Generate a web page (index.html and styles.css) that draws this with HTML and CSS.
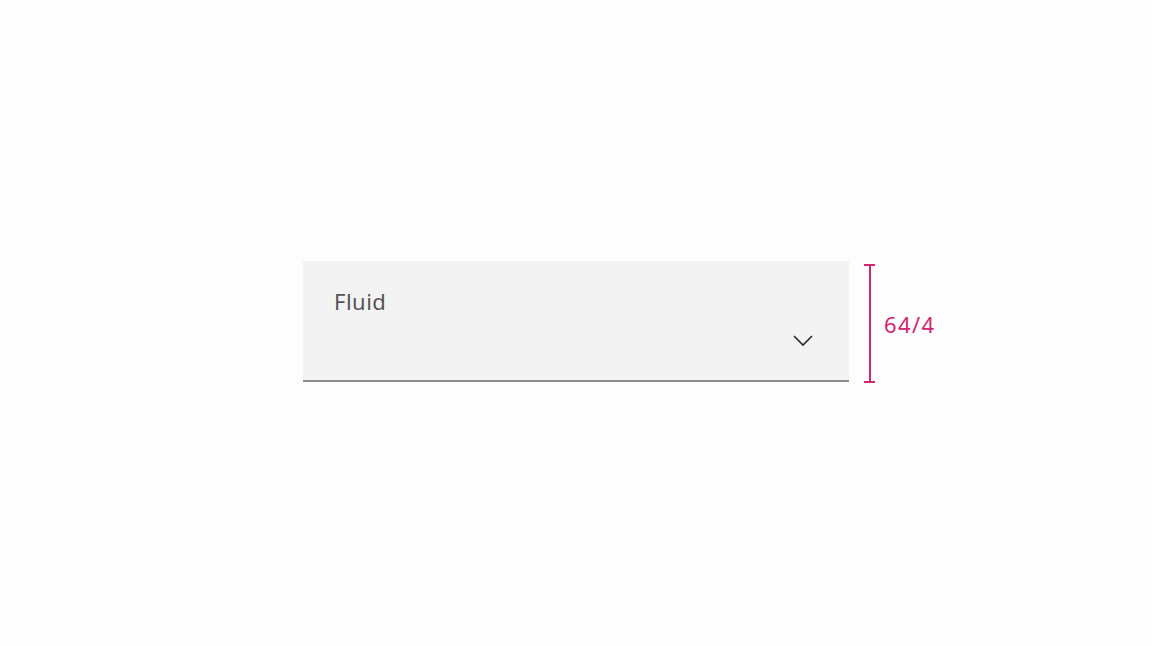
FILE: index.html
```html
<!DOCTYPE html>
<html>
<head>
<meta charset="utf-8">
<link rel="stylesheet" href="styles.css">
</head>
<body>
<div class="stage">
  <div class="field">
    <div class="label">Fluid</div>
    <svg class="chevron" width="20" height="12" viewBox="0 0 20 12"><path d="M1 1 L10 10 L19 1" fill="none" stroke="#2b2b2b" stroke-width="1.6"/></svg>
  </div>
  <div class="measure">
    <div class="bracket"></div>
    <div class="mtext">64/4</div>
  </div>
</div>
</body>
</html>
```
FILE: styles.css
```css
html, body { margin: 0; padding: 0; background: #fdfdfd; }
.stage {
  display: flex;
  align-items: flex-start;
  padding: 261px 0 0 303px;
  font-family: "Noto Sans", "Open Sans", sans-serif;
}
.field {
  position: relative;
  width: 546px;
  height: 119px;
  background: #f3f3f3;
  border-bottom: 2px solid #8f8a8f;
  box-sizing: content-box;
}
.label {
  padding: 25px 0 0 31px;
  font-size: 22px;
  color: #555555;
  letter-spacing: 0.5px;
}
.chevron {
  position: absolute;
  left: 490px;
  top: 74px;
}
.measure {
  display: flex;
  align-items: center;
  margin-left: 15px;
  margin-top: 3px;
  height: 119px;
}
.bracket {
  width: 11px;
  height: 115px;
  border-top: 2px solid #d12771;
  border-bottom: 2px solid #d12771;
  background: linear-gradient(#d12771, #d12771) center / 2px 100% no-repeat;
}
.mtext {
  margin-left: 9px;
  font-size: 22px;
  color: #d12771;
  letter-spacing: 1.4px;
}
```
